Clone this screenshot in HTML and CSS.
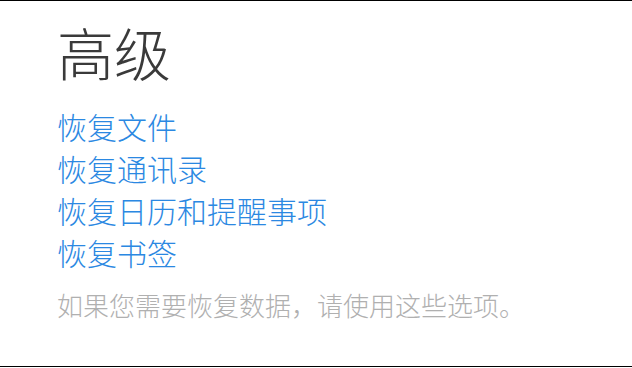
FILE: index.html
```html
<!DOCTYPE html>
<html lang="zh-CN">
<head>
<meta charset="utf-8">
<link rel="stylesheet" href="styles.css">
</head>
<body>
<div class="page">
  <h1 class="title">高级</h1>
  <ul class="links">
    <li><a href="#">恢复文件</a></li>
    <li><a href="#">恢复通讯录</a></li>
    <li><a href="#">恢复日历和提醒事项</a></li>
    <li><a href="#">恢复书签</a></li>
  </ul>
  <p class="note">如果您需要恢复数据，请使用这些选项。</p>
</div>
</body>
</html>
```
FILE: styles.css
```css
html, body {
  margin: 0;
  padding: 0;
  background: #fff;
}
body {
  font-family: "Noto Sans CJK SC", "Noto Sans", sans-serif;
  font-weight: 300;
}
.page {
  box-sizing: border-box;
  height: 367px;
  border-top: 1px solid #000;
  border-bottom: 1px solid #000;
  padding: 9px 0 0 57px;
}
.title {
  margin: 0;
  font-size: 57px;
  font-weight: 300;
  line-height: 82px;
  color: #3a3a3a;
}
.links {
  list-style: none;
  margin: 13px 0 0;
  padding: 0;
}
.links li {
  font-size: 30px;
  line-height: 42px;
}
.links a {
  color: #2b88e2;
  text-decoration: none;
}
.note {
  margin: 14px 0 0;
  font-size: 26px;
  line-height: 36px;
  color: #b0b0b0;
}
```
